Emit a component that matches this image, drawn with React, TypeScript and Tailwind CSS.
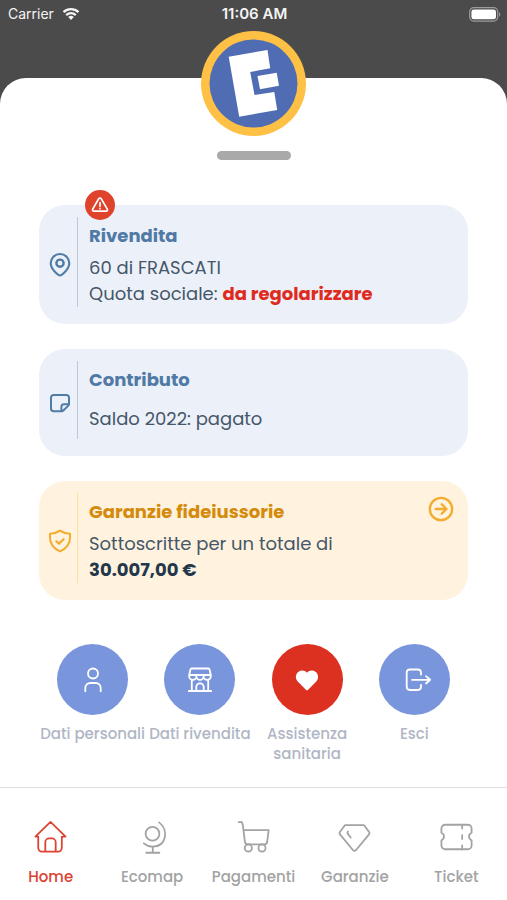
import type { ReactNode } from "react";

const iconProps = {
  fill: "none",
  stroke: "currentColor",
  strokeLinecap: "round" as const,
  strokeLinejoin: "round" as const,
  "aria-hidden": true,
};

function StatusBar() {
  return (
    <header className="grid h-7 grid-cols-3 items-center pl-2 pr-[6px] font-[Inter,sans-serif] text-[#f4f4f4]">
      <div className="flex items-center gap-2 text-sm leading-5">
        <span>Carrier</span>
        <svg viewBox="0 0 18 14" className="h-[14px] w-[18px]" {...iconProps}>
          <path d="M1.5 5.1a11 11 0 0 1 15 0M4.2 8.1a7 7 0 0 1 9.6 0" strokeWidth="2.2" strokeLinecap="butt" />
          <path d="M9 13 6.2 10.1a4 4 0 0 1 5.6 0Z" fill="currentColor" stroke="none" />
        </svg>
      </div>
      <div className="text-center text-[15px] font-semibold leading-5">11:06 AM</div>
      <svg viewBox="0 0 32 15" className="h-[15px] w-8 justify-self-end" aria-hidden="true">
        <rect x="0.7" y="0.7" width="28" height="13.4" rx="4" fill="none" stroke="#9c9c9c" strokeWidth="1.2" />
        <rect x="2.4" y="2.5" width="24.6" height="9.8" rx="2.4" fill="#fff" />
        <path d="M30 5.2c1.8.8 1.8 3.6 0 4.4Z" fill="#9c9c9c" />
      </svg>
    </header>
  );
}

function Logo() {
  return (
    <svg viewBox="0 0 105 105" className="size-[105px]" role="img" aria-label="Logo">
      <circle cx="52.5" cy="52.5" r="52.5" fill="#fec146" />
      <circle cx="52.5" cy="52.5" r="44" fill="#506db3" />
      <path
        d="M27.7 25.7 66.5 19 69.2 37.3 49.2 41 53.5 64 73.3 61 76.2 79 38.2 85.7Z"
        fill="#fff"
      />
      <path d="M56.5 45 75.7 41.7 78 54.7 59 58.3Z" fill="#fff" />
    </svg>
  );
}

function PinIcon() {
  return (
    <svg viewBox="0 0 24 26" className="h-[26px] w-6" {...iconProps} strokeWidth="2.1">
      <path d="M12 23.5c-1.3 0-9.3-6-9.3-12.2a9.3 9.3 0 0 1 18.6 0c0 6.2-8 12.2-9.3 12.2Z" />
      <circle cx="12" cy="11.2" r="3.6" strokeWidth="2.4" />
    </svg>
  );
}

function NoteIcon() {
  return (
    <svg viewBox="0 0 24 24" className="size-6" {...iconProps} strokeWidth="2">
      <path d="M13.5 20.2H5.8a2.8 2.8 0 0 1-2.8-2.8V6.6A2.6 2.6 0 0 1 5.6 4h12.8A2.6 2.6 0 0 1 21 6.6v6.2a3 3 0 0 1-.9 2.1l-4.5 4.4a3 3 0 0 1-2.1.9Z" />
      <path d="M13.4 20v-4.3a2.5 2.5 0 0 1 2.5-2.5h5" />
    </svg>
  );
}

function ShieldIcon() {
  return (
    <svg viewBox="0 0 24 24" className="size-6" {...iconProps} strokeWidth="2">
      <path d="M12 1.6C9.3 3.5 6 4.6 2.1 4.8 1 13.5 4 19 12 22.4 20 19 23 13.5 21.9 4.8 18 4.6 14.7 3.5 12 1.6Z" />
      <path d="m8.3 12.3 2.6 2.3 4.7-4.4" strokeWidth="2.2" />
    </svg>
  );
}

function AlertBadge() {
  return (
    <span className="absolute -top-[15px] left-[46px] flex size-[30px] items-center justify-center rounded-full bg-[#e0432c] text-white">
      <svg viewBox="0 0 18 18" className="size-[18px]" {...iconProps} strokeWidth="1.7">
        <path d="M7.7 2.8a1.5 1.5 0 0 1 2.6 0l6 10.3a1.4 1.4 0 0 1-1.2 2.1H2.9a1.4 1.4 0 0 1-1.2-2.1Z" />
        <path d="M9 6.5v3.700M9 12.4v.3" />
      </svg>
    </span>
  );
}

type CardProps = {
  title: string;
  icon: ReactNode;
  warm?: boolean;
  badge?: ReactNode;
  action?: ReactNode;
  spaced?: boolean;
  children: ReactNode;
};

function Card({ title, icon, warm, badge, action, spaced, children }: CardProps) {
  return (
    <section
      className={`relative flex rounded-[26px] pb-[17px] pr-[14px] pt-3 ${warm ? "bg-[#fff2de]" : "bg-[#ecf0f9]"}`}
    >
      {badge}
      <div
        className={`flex w-[39px] shrink-0 items-center justify-center border-r pl-[3px] pt-[5px] ${
          warm ? "border-[#ffdf9f] text-[#f3ac2c]" : "border-[#bcc8d6] text-[#4f7ba5]"
        }`}
      >
        {icon}
      </div>
      <div className={`flex min-w-0 grow flex-col pl-[11px] pt-[6px] ${spaced ? "gap-[13px] pb-[7px]" : "gap-[6px]"}`}>
        <h2 className={`text-lg font-bold leading-[26px] ${warm ? "text-[#d48b0c]" : "text-[#507aa5]"}`}>{title}</h2>
        <p className="text-lg leading-[26px] text-[#455768]">{children}</p>
      </div>
      {action}
    </section>
  );
}

function UserIcon() {
  return (
    <svg viewBox="0 0 28 28" className="size-7" {...iconProps} strokeWidth="1.8">
      <circle cx="14" cy="7.5" r="5" />
      <path d="M6.3 25.3V22a5 5 0 0 1 5-5h5.4a5 5 0 0 1 5 5v3.3" />
    </svg>
  );
}

function ShopIcon() {
  return (
    <svg viewBox="0 0 28 28" className="size-7" {...iconProps} strokeWidth="1.8">
      <path d="M5.5 2.5h17a1 1 0 0 1 1 .8l1.300 5.700H3.200l1.300-5.700a1 1 0 0 1 1-.8ZM3.200 9v1.300a3.600 3.600 0 0 0 7.200 0 3.600 3.600 0 0 0 7.200 0 3.600 3.600 0 0 0 7.200 0V9M10.400 9v1.300M17.600 9v1.300" />
      <path d="M5.800 13.900V25M22.200 13.900V25M2.800 25h22.400M10.300 25v-4a3.700 3.700 0 0 1 7.400 0v4" />
    </svg>
  );
}

function HeartIcon() {
  return (
    <svg viewBox="0 0 28 28" className="size-7" fill="currentColor" aria-hidden="true">
      <path d="M13.1 24 4.7 15.4C.8 11.2 3.6 4.4 9.2 4.4c2 0 3.5.9 4.8 2.3 1.3-1.400 2.800-2.300 4.800-2.300 5.600 0 8.400 6.800 4.500 11L14.900 24a1.300 1.300 0 0 1-1.800 0Z" />
    </svg>
  );
}

function ExitIcon() {
  return (
    <svg viewBox="0 0 28 28" className="size-7 overflow-visible" {...iconProps} strokeWidth="1.8">
      <path d="M21 8.7V6.7a3.2 3.2 0 0 0-3.2-3.2H9.9a3.2 3.2 0 0 0-3.2 3.2v14.1A3.2 3.2 0 0 0 9.9 24h7.9a3.2 3.2 0 0 0 3.2-3.2v-2M12 13.8h18M26 10.1l4.2 3.7-4.2 3.7" />
    </svg>
  );
}

const actions = [
  { label: "Dati personali", icon: <UserIcon />, color: "bg-[#7996dc]" },
  { label: "Dati rivendita", icon: <ShopIcon />, color: "bg-[#7996dc]" },
  { label: "Assistenza sanitaria", icon: <HeartIcon />, color: "bg-[#dc3020]" },
  { label: "Esci", icon: <ExitIcon />, color: "bg-[#7996dc]" },
];

const tabs = [
  {
    label: "Home",
    icon: <path d="M4 17.5H1.5L17.5 2l16 15.500H31M4.500 17.500v12a4 4 0 0 0 4 4h17a4 4 0 0 0 4-4v-12M12 33.500v-10a4 4 0 0 1 4-4h3a4 4 0 0 1 4 4v10" />,
  },
  {
    label: "Ecomap",
    icon: (
      <>
        <circle cx="17.5" cy="14.5" r="7.3" />
        <path d="M24.5 2.5C35 10.5 32.5 28 17.8 28.3 14.2 28.3 11 27 8.3 24.7M17.8 28.3v6.4M10.8 34.7h14" />
      </>
    ),
  },
  {
    label: "Pagamenti",
    icon: (
      <>
        <path d="M1.8 2.3h3.4l1 3.2 2.2 17.7a3 3 0 0 0 3 2.6h17.8a3 3 0 0 0 2.8-2.5l1.6-12.6H6.9" />
        <circle cx="12" cy="29.7" r="3.8" />
        <circle cx="26.5" cy="29.7" r="3.8" />
      </>
    ),
  },
  {
    label: "Garanzie",
    icon: (
      <>
        <path d="M8.2 5.5h18.6a2 2 0 0 1 1.5.8l4.7 6.5a2 2 0 0 1-.1 2.4L19 32a2 2 0 0 1-3 0L2.1 15.2a2 2 0 0 1-.1-2.4l4.7-6.500a2 2 0 0 1 1.500-.8Z" />
        <path d="m10.5 12.2-.5 2 3.5 4.3" />
      </>
    ),
  },
  {
    label: "Ticket",
    icon: (
      <>
        <path d="M5.5 5h24a4 4 0 0 1 4 4v4.5a4.3 4.3 0 0 0 0 8V27a4 4 0 0 1-4 4h-24a4 4 0 0 1-4-4v-5.500a4.300 4.300 0 0 0 0-8V9a4 4 0 0 1 4-4Z" />
        <path d="M23.500 5v4M23.500 16v4M23.500 27v4" />
      </>
    ),
  },
];

export default function App() {
  return (
    <div className="flex min-h-screen flex-col bg-[#4b4b4b] font-[Poppins,Inter,sans-serif]">
      <StatusBar />
      <main className="mt-[50px] flex grow flex-col rounded-t-[26px] bg-white">
        <div className="-mt-[47px] flex flex-col items-center gap-[15px]">
          <Logo />
          <button type="button" aria-label="Chiudi pannello" className="h-[9px] w-[74px] rounded-full bg-[#a9a9a9]" />
        </div>

        <div className="mt-[45px] flex flex-col gap-[25px] px-[39px]">
          <Card title="Rivendita" icon={<PinIcon />} badge={<AlertBadge />}>
            60 di FRASCATI
            <br />
            Quota sociale: <strong className="font-bold text-[#df2a20]">da regolarizzare</strong>
          </Card>
          <Card title="Contributo" icon={<NoteIcon />} spaced>
            Saldo 2022: pagato
          </Card>
          <Card
            title="Garanzie fideiussorie"
            icon={<ShieldIcon />}
            warm
            action={
              <button type="button" aria-label="Apri garanzie" className="mt-[3px] size-[26px] self-start text-[#f3ac2c]">
                <svg viewBox="0 0 26 26" className="size-[26px]" {...iconProps} strokeWidth="2.3">
                  <circle cx="13" cy="13" r="11.2" />
                  <path d="M7.7 13h10.6M13.7 8.2l4.8 4.8-4.8 4.8" />
                </svg>
              </button>
            }
          >
            Sottoscritte per un totale di
            <br />
            <strong className="font-bold text-[#23374b]">30.007,00 €</strong>
          </Card>
        </div>

        <div className="mt-11 grid grid-cols-4 px-[39px] pb-5">
          {actions.map((a) => (
            <button key={a.label} type="button" className="flex flex-col items-center gap-[9px]">
              <span className={`flex size-[71px] items-center justify-center rounded-full text-white ${a.color}`}>
                {a.icon}
              </span>
              <span className="text-[15px] font-medium leading-5 text-[#b0b6c5]">{a.label}</span>
            </button>
          ))}
        </div>
      </main>

      <nav className="grid grid-cols-5 border-t border-[#dedede] bg-white pb-[13px] pt-8">
        {tabs.map((t, i) => (
          <a
            key={t.label}
            href="#"
            aria-current={i === 0 ? "page" : undefined}
            className={`flex flex-col items-center gap-[13px] ${i === 0 ? "text-[#dc4431]" : "text-[#a3a3a3]"}`}
          >
            <svg viewBox="0 0 35 36" className="h-[34px] w-[33px]" {...iconProps} strokeWidth="1.9">
              {t.icon}
            </svg>
            <span className="text-[15px] font-medium leading-5">{t.label}</span>
          </a>
        ))}
      </nav>
    </div>
  );
}
